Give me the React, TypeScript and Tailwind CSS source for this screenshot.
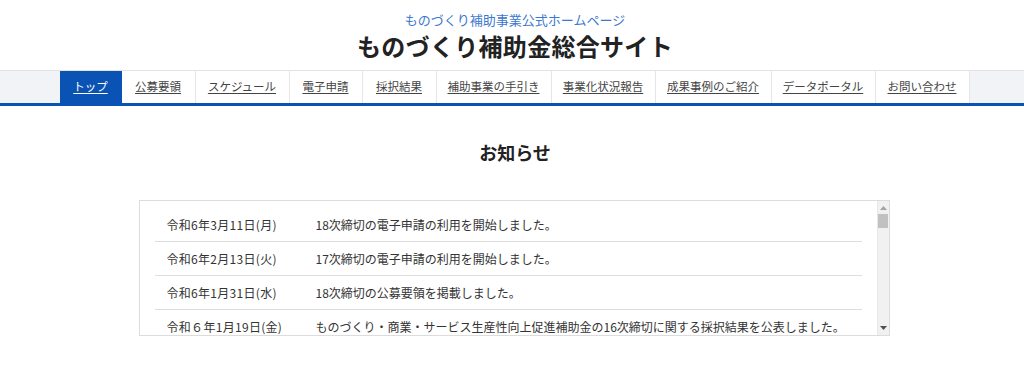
const navItems = [
  { label: "トップ", w: "w-[62px]" },
  { label: "公募要領", w: "w-[74px]" },
  { label: "スケジュール", w: "w-[94px]" },
  { label: "電子申請", w: "w-[73px]" },
  { label: "採択結果", w: "w-[74px]" },
  { label: "補助事業の手引き", w: "w-[115px]" },
  { label: "事業化状況報告", w: "w-[104px]" },
  { label: "成果事例のご紹介", w: "w-[116px]" },
  { label: "データポータル", w: "w-[104px]" },
  { label: "お問い合わせ", w: "w-[94px]" },
];

const news = [
  { date: "令和6年3月11日(月)", text: "18次締切の電子申請の利用を開始しました。" },
  { date: "令和6年2月13日(火)", text: "17次締切の電子申請の利用を開始しました。" },
  { date: "令和6年1月31日(水)", text: "18次締切の公募要領を掲載しました。" },
  {
    date: "令和６年1月19日(金)",
    text: "ものづくり・商業・サービス生産性向上促進補助金の16次締切に関する採択結果を公表しました。",
  },
];

export default function App() {
  return (
    <div
      className="min-h-[365px] bg-white text-[#333]"
      style={{ fontFamily: '"Noto Sans CJK JP", "Noto Sans", sans-serif' }}
    >
      <header className="flex flex-col items-center pt-[11px] pl-[6px]">
        <p className="text-[13px] leading-[18px] text-[#3b78d0]">ものづくり補助事業公式ホームページ</p>
        <h1 className="text-[24px] leading-[34px] font-bold text-[#222] tracking-[0.3px]">
          ものづくり補助金総合サイト
        </h1>
      </header>

      <nav className="mt-[7px] border-t border-[#e3e3e3] bg-[#f1f3f7] border-b-[3px] border-b-[#0b52b5] pl-[5px]">
        <ul className="mx-auto flex w-[910px]">
          {navItems.map((item, i) => (
            <li
              key={item.label}
              className={
                i === 0
                  ? `flex h-[32px] ${item.w} items-center justify-center bg-[#0b52b5] text-white`
                  : `flex h-[32px] ${item.w} items-center justify-center border-r border-[#e6e6e6] bg-white text-[#444]`
              }
            >
              <a href="#" className="text-[11.5px] whitespace-nowrap underline underline-offset-2">
                {item.label}
              </a>
            </li>
          ))}
        </ul>
      </nav>

      <section className="flex flex-col items-center pl-[6px]">
        <h2 className="mt-[33px] text-[18px] leading-[26px] font-bold text-[#222]">お知らせ</h2>

        <div className="mt-[35px] ml-[-2px] flex h-[136px] w-[751px] border border-[#dcdcdc]">
          <div className="flex-1 overflow-hidden px-[15px] pt-[7px]">
            {news.map((n, i) => (
              <div
                key={i}
                className="flex h-[34px] items-center border-b border-[#dedede] text-[12px] whitespace-nowrap"
              >
                <span className="w-[161px] shrink-0 pl-[12px] tracking-[0.3px]">{n.date}</span>
                <span>{n.text}</span>
              </div>
            ))}
          </div>
          <div className="flex w-[12px] flex-col items-center border-l border-[#e8e8e8] bg-[#f1f1f1]">
            <svg width="7" height="4" viewBox="0 0 7 4" className="mt-[5px]">
              <path d="M0 4 L3.5 0 L7 4 Z" fill="#a3a3a3" />
            </svg>
            <div className="mt-[4px] h-[14px] w-[10px] bg-[#c1c1c1]" />
            <div className="flex-1" />
            <svg width="7" height="4" viewBox="0 0 7 4" className="mb-[5px]">
              <path d="M0 0 L7 0 L3.5 4 Z" fill="#505050" />
            </svg>
          </div>
        </div>
      </section>
    </div>
  );
}
